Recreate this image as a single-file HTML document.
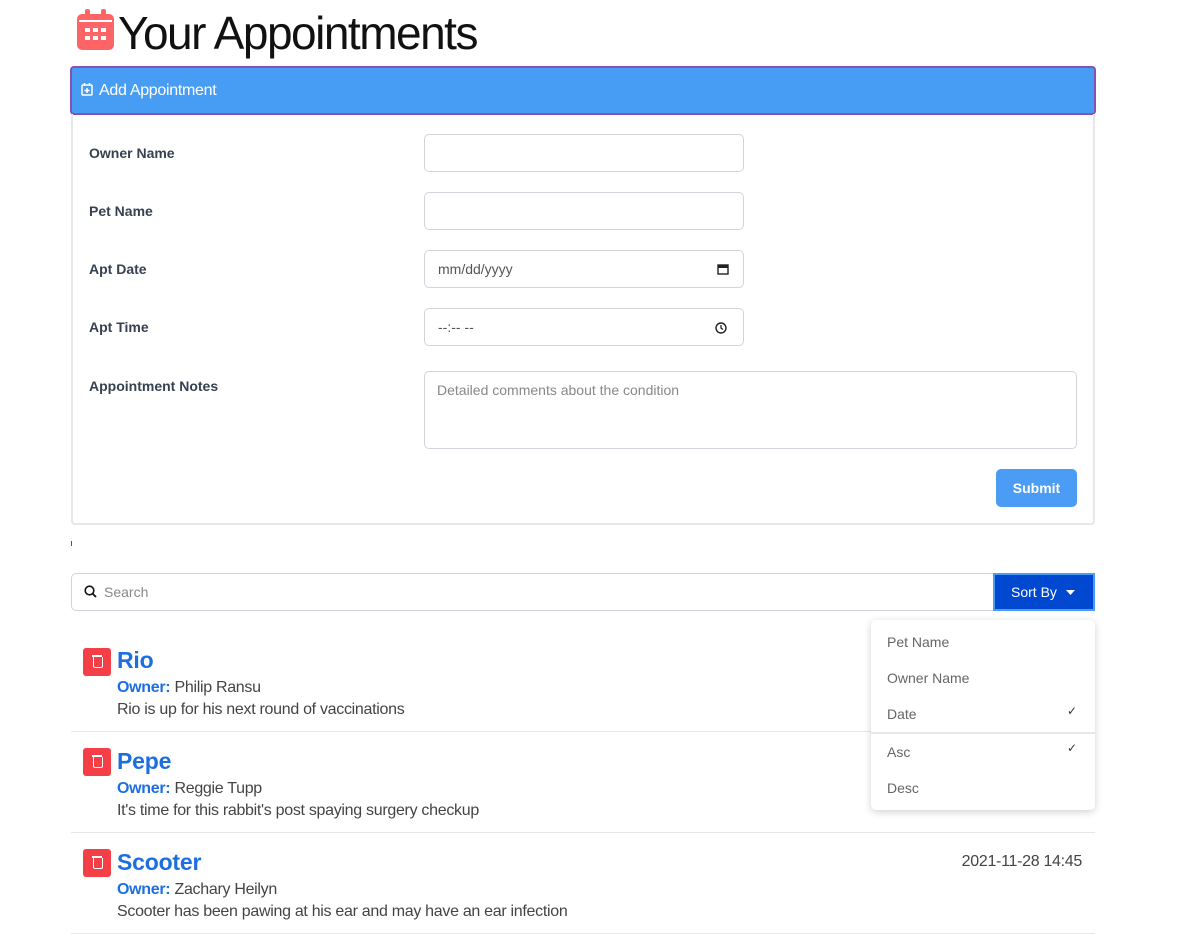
<!DOCTYPE html>
<html><head><style>
*{box-sizing:border-box;margin:0;padding:0}
body{width:1178px;height:943px;background:#fff;font-family:"Liberation Sans",sans-serif;position:relative;overflow:hidden;color:#374151}
.a{position:absolute}
.lbl{position:absolute;left:89px;font-size:14px;font-weight:bold;color:#374151}
.inp{position:absolute;left:424px;width:320px;height:38px;border:1px solid #d1d5db;border-radius:5px;background:#fff;font-size:14px;color:#555;padding:0 13px;line-height:36px}
.trash{position:absolute;left:83px;width:28px;height:28px;background:#f43f46;border-radius:3px}
.trash::after{content:"";position:absolute;left:10px;top:9px;width:8px;height:10px;border:1.5px solid #fff;border-top:none;border-radius:0 0 2px 2px}
.trash::before{content:"";position:absolute;left:9px;top:7px;width:10px;height:1.5px;background:#fff}
.name{position:absolute;left:117px;font-size:23px;font-weight:bold;color:#1d6fe0;letter-spacing:-0.2px}
.own{position:absolute;left:117px;font-size:16px;color:#444;letter-spacing:-0.3px}
.own b{color:#1d6fe0}
.note{position:absolute;left:117px;font-size:16px;color:#444;letter-spacing:-0.3px}
.sep{position:absolute;left:71px;width:1024px;height:1px;background:#e5e7eb}
.dd{position:absolute;left:887px;font-size:14px;color:#666}
</style></head><body>
<svg class="a" style="left:77px;top:9px" width="37" height="41" viewBox="0 0 37 41"><rect x="0" y="5" width="37" height="36" rx="5" fill="#fd6465"/><rect x="8" y="0" width="5" height="10" rx="2" fill="#fd6465"/><rect x="24" y="0" width="5" height="10" rx="2" fill="#fd6465"/><g fill="#fff"><rect x="8" y="19" width="5" height="4"/><rect x="16" y="19" width="5" height="4"/><rect x="24" y="19" width="5" height="4"/><rect x="8" y="27" width="5" height="4"/><rect x="16" y="27" width="5" height="4"/><rect x="24" y="27" width="5" height="4"/></g><rect x="2" y="11" width="33" height="2" fill="#fff"/></svg>
<div class="a" style="left:118px;top:6px;font-size:46px;color:#111;letter-spacing:-1.5px">Your Appointments</div>
<div class="a" style="left:70px;top:66px;width:1026px;height:49px;background:#479cf4;border:2px solid #8a4fb5;border-radius:4px"></div>
<svg class="a" style="left:81px;top:83px" width="12" height="13" viewBox="0 0 12 13"><rect x="1" y="2" width="10" height="10" rx="1" fill="none" stroke="#fff" stroke-width="1.5"/><path d="M3.5 0v3M8.5 0v3M6 5v5M3.5 7.5h5" stroke="#fff" stroke-width="1.5"/></svg>
<div class="a" style="left:99px;top:82px;font-size:16px;color:#fff;letter-spacing:-0.3px">Add Appointment</div>
<div class="a" style="left:71px;top:114px;width:1024px;height:411px;border:2px solid #e5e7eb;border-top:none;border-radius:0 0 4px 4px"></div>
<div class="lbl" style="top:145px">Owner Name</div>
<div class="lbl" style="top:203px">Pet Name</div>
<div class="lbl" style="top:261px">Apt Date</div>
<div class="lbl" style="top:319px">Apt Time</div>
<div class="lbl" style="top:378px">Appointment Notes</div>
<div class="inp" style="top:134px"></div>
<div class="inp" style="top:192px"></div>
<div class="inp" style="top:250px">mm/dd/yyyy<svg class="a" style="right:14px;top:12px" width="12" height="12" viewBox="0 0 12 12"><rect x="1" y="2" width="10" height="9" fill="none" stroke="#222" stroke-width="1.4"/><rect x="1" y="2" width="10" height="3" fill="#222"/></svg></div>
<div class="inp" style="top:308px">--:-- --<svg class="a" style="right:16px;top:13px" width="12" height="12" viewBox="0 0 12 12"><circle cx="6" cy="6" r="5" fill="none" stroke="#222" stroke-width="1.4"/><path d="M6 3v3l2 1.5" fill="none" stroke="#222" stroke-width="1.3"/></svg></div>
<div class="inp" style="top:371px;width:653px;height:78px;line-height:normal;padding-top:10px;padding-left:12px;color:#888">Detailed comments about the condition</div>
<div class="a" style="left:996px;top:469px;width:81px;height:38px;background:#4a9cf4;border-radius:5px;color:#fff;font-weight:bold;font-size:14px;text-align:center;line-height:38px">Submit</div>
<div class="a" style="left:71px;top:541px;width:1px;height:5px;background:#555"></div>
<div class="a" style="left:71px;top:573px;width:924px;height:38px;border:1px solid #d1d5db;border-radius:5px 0 0 5px"></div>
<svg class="a" style="left:84px;top:585px" width="13" height="13" viewBox="0 0 13 13"><circle cx="5.5" cy="5.5" r="4.3" fill="none" stroke="#111" stroke-width="1.6"/><path d="M8.7 8.7L12 12" stroke="#111" stroke-width="1.8"/></svg>
<div class="a" style="left:104px;top:584px;font-size:14px;color:#888">Search</div>
<div class="a" style="left:993px;top:573px;width:102px;height:38px;background:#0048d0;border:2px solid #4a9cf4;color:#fff;font-size:14px;line-height:34px;padding-left:16px">Sort By<svg class="a" style="left:71px;top:15px" width="9" height="5"><path d="M0 0h9L4.5 5z" fill="#fff"/></svg></div>

<div class="trash" style="top:648px"></div><div class="name" style="top:647px">Rio</div>
<div class="own" style="top:679px"><b>Owner:</b> Philip Ransu</div>
<div class="note" style="top:701px">Rio is up for his next round of vaccinations</div>
<div class="sep" style="top:731px"></div>
<div class="trash" style="top:748px"></div><div class="name" style="top:748px">Pepe</div>
<div class="own" style="top:780px"><b>Owner:</b> Reggie Tupp</div>
<div class="note" style="top:802px">It's time for this rabbit's post spaying surgery checkup</div>
<div class="sep" style="top:832px"></div>
<div class="trash" style="top:849px"></div><div class="name" style="top:849px">Scooter</div>
<div class="a" style="right:96px;top:853px;font-size:16px;color:#444;letter-spacing:-0.3px">2021-11-28 14:45</div>
<div class="own" style="top:881px"><b>Owner:</b> Zachary Heilyn</div>
<div class="note" style="top:903px">Scooter has been pawing at his ear and may have an ear infection</div>
<div class="sep" style="top:933px"></div>

<div class="a" style="left:871px;top:620px;width:224px;height:190px;background:#fff;border-radius:5px;box-shadow:0 2px 8px rgba(0,0,0,.18)"></div>
<div class="dd" style="top:634px">Pet Name</div>
<div class="dd" style="top:670px">Owner Name</div>
<div class="dd" style="top:706px">Date</div>
<div class="a" style="left:1067px;top:704px;font-size:12px;color:#333">✓</div>
<div class="a" style="left:871px;top:732px;width:224px;height:2px;background:#e5e7eb"></div>
<div class="dd" style="top:744px">Asc</div>
<div class="a" style="left:1067px;top:741px;font-size:12px;color:#333">✓</div>
<div class="dd" style="top:780px">Desc</div>
</body></html>
